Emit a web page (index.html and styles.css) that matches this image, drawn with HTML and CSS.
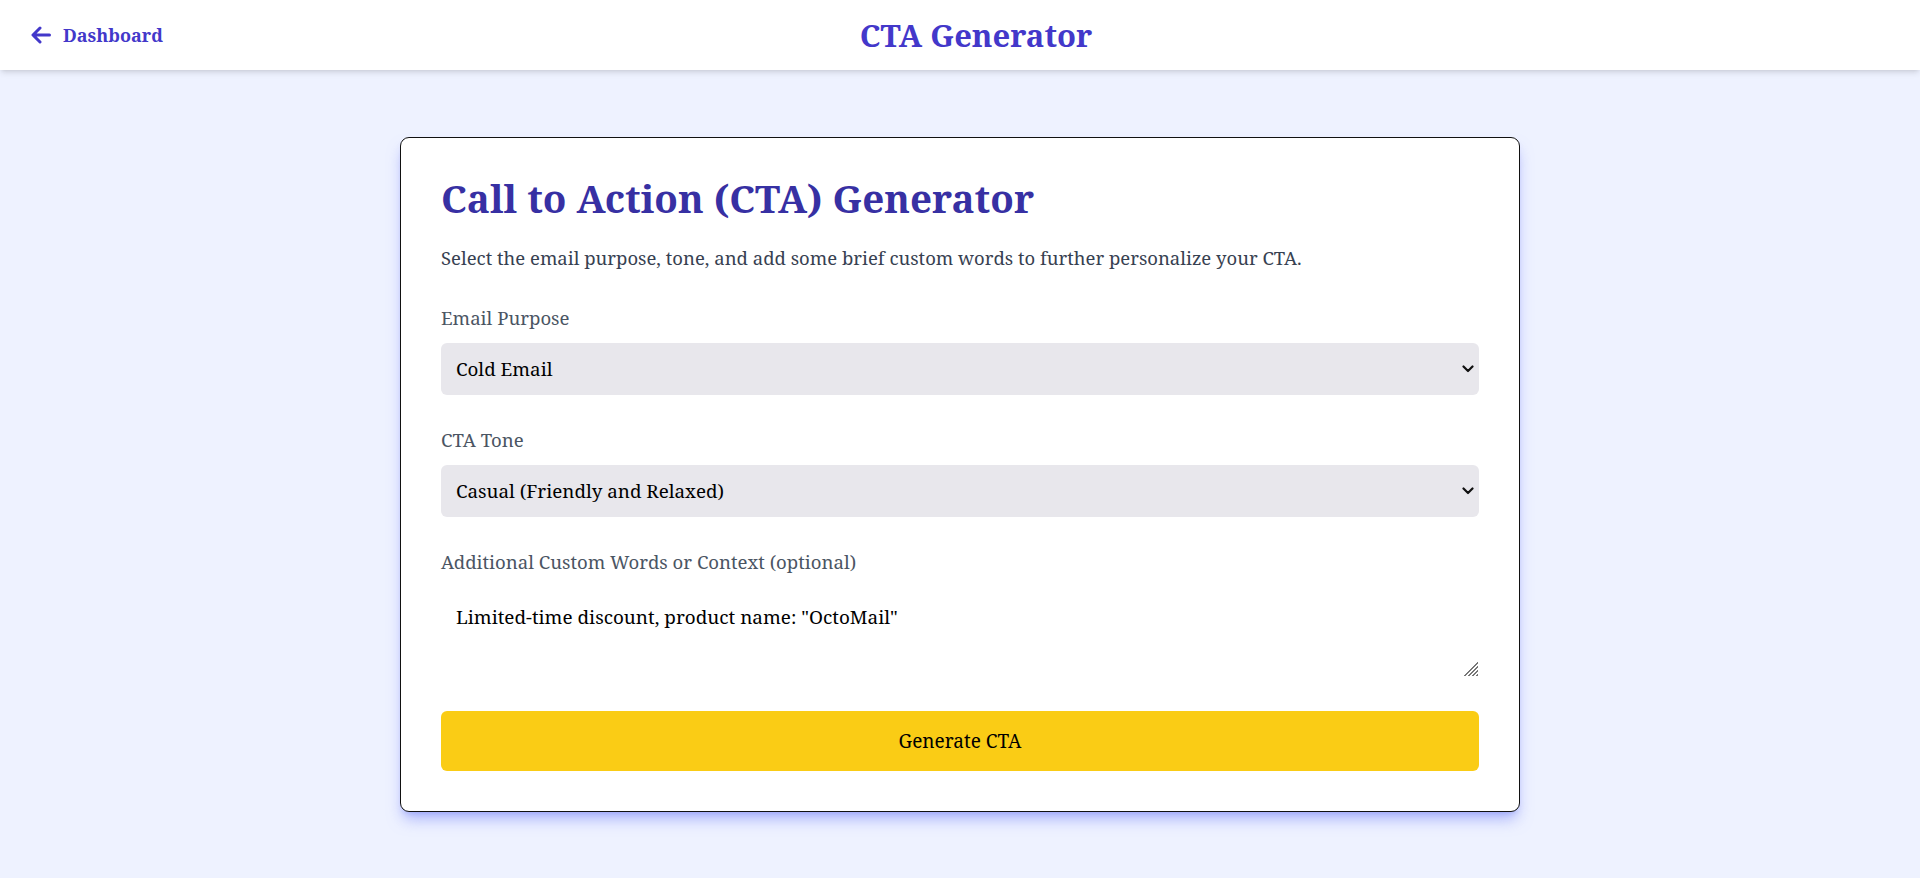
FILE: index.html
```html
<!DOCTYPE html>
<html lang="en">
<head>
<meta charset="utf-8">
<title>CTA Generator</title>
<link rel="stylesheet" href="styles.css">
</head>
<body>
<header class="topbar">
  <a class="back-link" href="#">
    <svg class="back-icon" width="20" height="18" viewBox="0 0 20 18" aria-hidden="true">
      <path d="M9 2 L2 9 L9 16 M2.5 9 H18.5" fill="none" stroke="currentColor" stroke-width="3" stroke-linecap="round" stroke-linejoin="round"/>
    </svg>
    <span>Dashboard</span>
  </a>
  <h1 class="app-title">CTA Generator</h1>
</header>
<main class="page">
  <section class="card">
    <h2 class="card-title">Call to Action (CTA) Generator</h2>
    <p class="card-intro">Select the email purpose, tone, and add some brief custom words to further personalize your CTA.</p>
    <label class="field-label" for="purpose">Email Purpose</label>
    <div class="select-wrap">
      <select id="purpose" class="field-select">
        <option>Cold Email</option>
      </select>
      <svg class="chevron" width="12" height="8" viewBox="0 0 12 8" aria-hidden="true">
        <path d="M1.5 1.5 L6 6 L10.5 1.5" fill="none" stroke="#111" stroke-width="2.2" stroke-linecap="round" stroke-linejoin="round"/>
      </svg>
    </div>
    <label class="field-label" for="tone">CTA Tone</label>
    <div class="select-wrap">
      <select id="tone" class="field-select">
        <option>Casual (Friendly and Relaxed)</option>
      </select>
      <svg class="chevron" width="12" height="8" viewBox="0 0 12 8" aria-hidden="true">
        <path d="M1.5 1.5 L6 6 L10.5 1.5" fill="none" stroke="#111" stroke-width="2.2" stroke-linecap="round" stroke-linejoin="round"/>
      </svg>
    </div>
    <label class="field-label" for="context">Additional Custom Words or Context (optional)</label>
    <textarea id="context" class="field-textarea" rows="2">Limited-time discount, product name: "OctoMail"</textarea>
    <button class="generate-btn" type="button">Generate CTA</button>
  </section>
</main>
</body>
</html>
```

FILE: styles.css
```css
* { box-sizing: border-box; }
html, body { margin: 0; padding: 0; }
body {
  background: #eef2ff;
  font-family: "Noto Serif", "DejaVu Serif", serif;
  color: #111827;
  min-height: 878px;
}
.topbar {
  height: 70px;
  background: #ffffff;
  box-shadow: 0 4px 6px -1px rgba(0,0,0,0.1), 0 2px 4px -2px rgba(0,0,0,0.1);
  display: flex;
  align-items: center;
  justify-content: center;
  position: relative;
}
.back-link {
  position: absolute;
  left: 31px;
  top: 0;
  height: 70px;
  display: flex;
  align-items: center;
  gap: 12px;
  color: #4338ca;
  text-decoration: none;
  font-weight: bold;
  font-size: 18px;
}
.back-icon { display: block; }
.app-title {
  margin: 0 0 0 32px;
  color: #4338ca;
  font-size: 31px;
  font-weight: bold;
}
.page {
  display: flex;
  justify-content: center;
  padding-top: 67px;
}
.card {
  width: 1120px;
  background: #ffffff;
  border: 1px solid #111111;
  border-radius: 9px;
  padding: 40px;
  display: flex;
  flex-direction: column;
  box-shadow: 0 10px 15px -3px rgba(129,140,248,0.6), 0 4px 6px -4px rgba(129,140,248,0.6);
}
.card-title {
  margin: 0 0 26px;
  font-size: 38.6px;
  line-height: 40px;
  color: #3730a3;
  font-weight: bold;
}
.card-intro {
  margin: 0 0 32px;
  font-size: 18.5px;
  line-height: 28px;
  color: #374151;
}
.field-label {
  font-size: 18.6px;
  line-height: 28px;
  color: #4b5563;
  margin-bottom: 11px;
}
.select-wrap {
  position: relative;
  margin-bottom: 31px;
}
.field-select {
  display: block;
  height: 52px;
  width: 100%;
  border: none;
  border-radius: 6px;
  background-color: #e8e7ec;
  font-family: inherit;
  font-size: 18.8px;
  color: #000;
  padding: 0 30px 0 15px;
  -webkit-appearance: none;
  appearance: none;
  outline: none;
}
.chevron {
  position: absolute;
  right: 5px;
  top: 22px;
  pointer-events: none;
}
.field-textarea {
  width: 100%;
  height: 90px;
  border: 1px solid transparent;
  border-radius: 6px;
  background: #ffffff;
  font-family: inherit;
  font-size: 18.9px;
  line-height: 28px;
  color: #000;
  padding: 15px 14px;
  margin-bottom: 34px;
  resize: vertical;
  outline: none;
}
.field-textarea::-webkit-resizer {
  background: linear-gradient(135deg, transparent 0 52%, #777 52% 58%, transparent 58% 66%, #777 66% 72%, transparent 72% 80%, #777 80% 86%, transparent 86% 92%, #777 92% 98%, transparent 98%);
}
.generate-btn {
  height: 60px;
  width: 100%;
  border: none;
  border-radius: 6px;
  background: #facc15;
  font-family: inherit;
  font-size: 19px;
  color: #000;
}
```
